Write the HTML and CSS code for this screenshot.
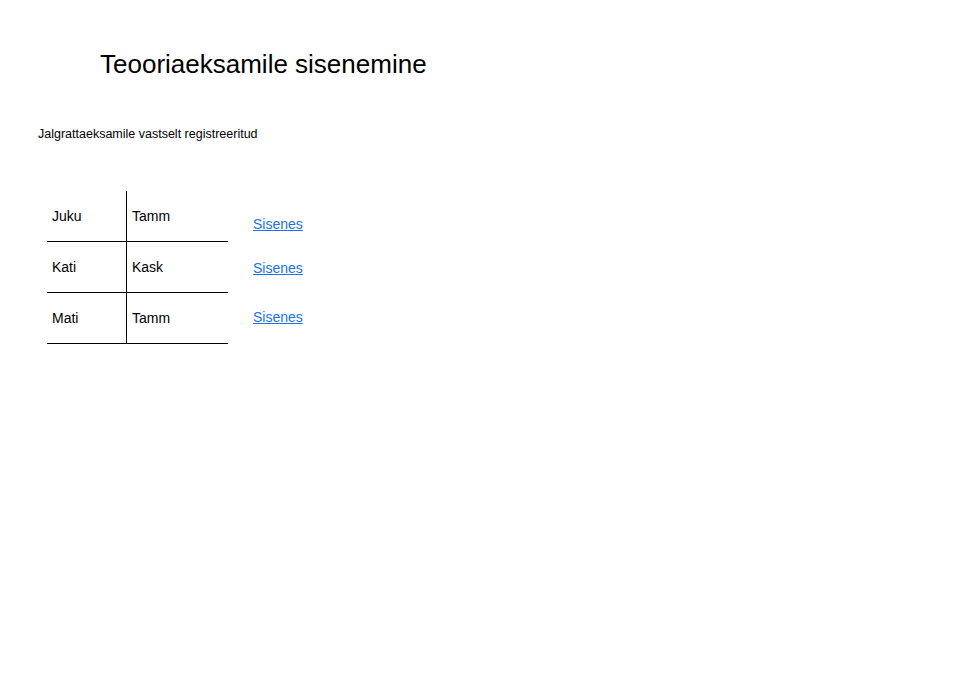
FILE: index.html
```html
<!DOCTYPE html>
<html lang="et">
<head>
<meta charset="utf-8">
<title>Teooriaeksamile sisenemine</title>
<link rel="stylesheet" href="styles.css">
</head>
<body>
<h1 class="title">Teooriaeksamile sisenemine</h1>
<p class="subtitle">Jalgrattaeksamile vastselt registreeritud</p>
<div class="content">
  <table class="people">
    <tr><td class="first">Juku</td><td class="last">Tamm</td></tr>
    <tr><td class="first">Kati</td><td class="last">Kask</td></tr>
    <tr><td class="first">Mati</td><td class="last">Tamm</td></tr>
  </table>
  <div class="links">
    <a href="#" class="link l1">Sisenes</a>
    <a href="#" class="link l2">Sisenes</a>
    <a href="#" class="link l3">Sisenes</a>
  </div>
</div>
</body>
</html>
```
FILE: styles.css
```css
html, body {
  margin: 0;
  padding: 0;
  background: #fff;
  color: #000;
  font-family: "Liberation Sans", Arial, sans-serif;
}
.title {
  margin: 49px 0 0 100px;
  font-size: 26px;
  line-height: 30px;
  font-weight: normal;
}
.subtitle {
  margin: 48px 0 0 38px;
  font-size: 12.5px;
  line-height: 15px;
}
.content {
  display: flex;
  align-items: flex-start;
  margin: 49px 0 0 47px;
}
.people {
  border-collapse: collapse;
  font-size: 14px;
}
.people td {
  height: 50px;
  padding: 0 0 0 5px;
  border-bottom: 1px solid #000;
  vertical-align: middle;
}
.people .first {
  width: 74px;
  border-right: 1px solid #000;
}
.people .last {
  width: 96px;
}
.links {
  display: flex;
  flex-direction: column;
  align-items: flex-start;
  margin-left: 25px;
  padding-top: 25px;
  font-size: 14px;
  line-height: 17px;
}
.link {
  color: #1a73e8;
  text-decoration: underline;
}
.l2 { margin-top: 27px; }
.l3 { margin-top: 32px; }
```
